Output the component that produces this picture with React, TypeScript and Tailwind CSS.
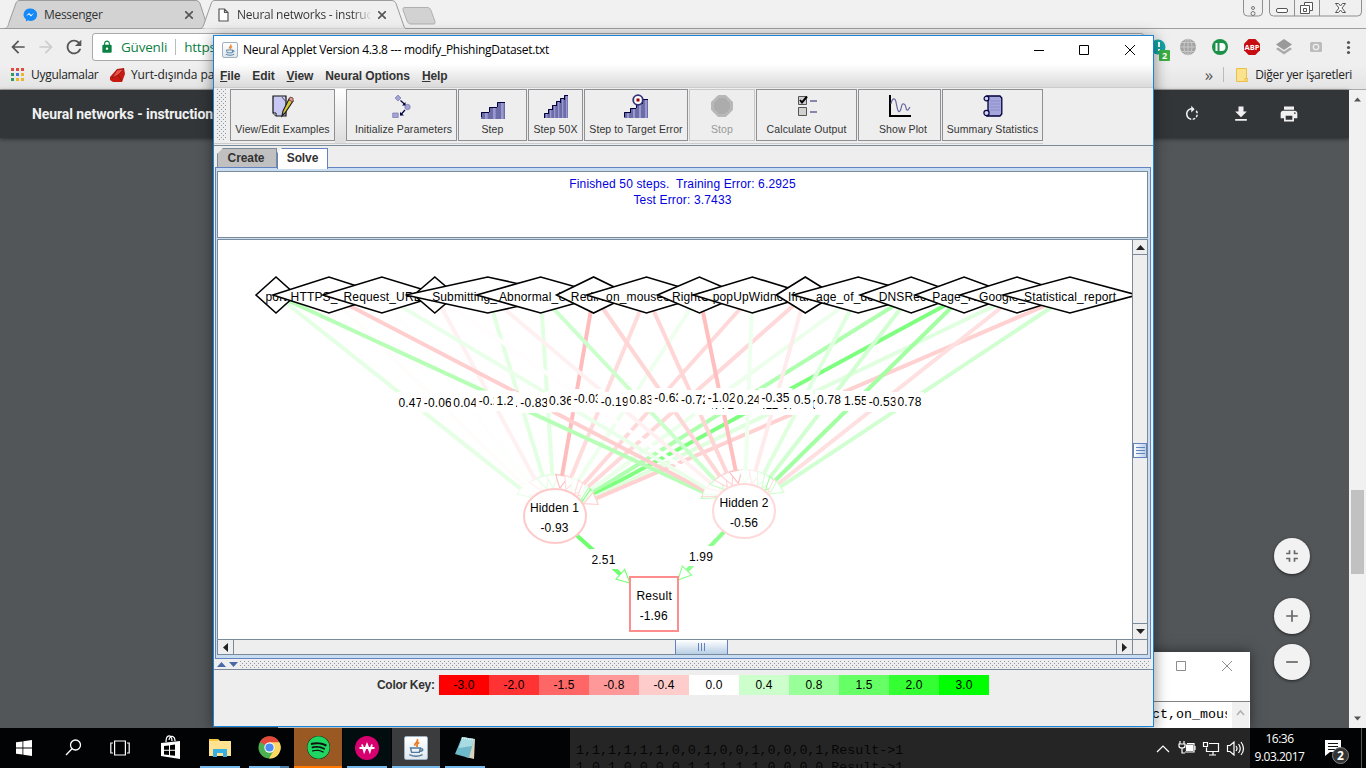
import React from "react";
import { MdRotateRight, MdFileDownload, MdPrint, MdFullscreenExit, MdAdd, MdRemove, MdArrowBack, MdArrowForward, MdRefresh, MdLock } from "react-icons/md";
import { FaSpotify } from "react-icons/fa";

type Feature = { name: string; half: number; h1: number; h2: number; l1: string; l2: string; y2: number };

const features: Feature[] = [
  { name: "port", half: 20, h1: 0.47, h2: 1.25, l1: "0.47", l2: "1.2", y2: 401 },
  { name: "HTTPS_token", half: 56, h1: -0.06, h2: -0.83, l1: "-0.06", l2: "-0.83", y2: 403 },
  { name: "Request_URL", half: 59, h1: 0.04, h2: 0.36, l1: "0.04", l2: "0.36", y2: 401 },
  { name: "", half: 21, h1: -0.25, h2: -0.03, l1: "-0.25", l2: "-0.03", y2: 399 },
  { name: "Submitting_to_email", half: 82, h1: 0.5, h2: -0.25, l1: "0.45", l2: "-0.19", y2: 402 },
  { name: "Abnormal_URL", half: 64, h1: 0.5, h2: 0.9, l1: "0.45", l2: "0.83", y2: 400 },
  { name: "Redirect", half: 37, h1: -1.15, h2: -0.7, l1: "-1.08", l2: "-0.63", y2: 398 },
  { name: "on_mouseover", half: 60, h1: -0.6, h2: -0.72, l1: "-0.60", l2: "-0.72", y2: 400 },
  { name: "RightClick", half: 42, h1: 0.3, h2: -1.1, l1: "0.30", l2: "-1.02", y2: 398 },
  { name: "popUpWidnow", half: 59, h1: -0.65, h2: 0.3, l1: "-0.60", l2: "0.24", y2: 400 },
  { name: "Iframe", half: 29, h1: -0.65, h2: -0.35, l1: "-0.65", l2: "-0.35", y2: 398 },
  { name: "age_of_domain", half: 65, h1: 0.35, h2: 0.55, l1: "12.77", l2: "0.5", y2: 400 },
  { name: "DNSRecord", half: 51, h1: 1.4, h2: 0.78, l1: "1.27", l2: "0.78", y2: 400 },
  { name: "Page_Rank", half: 49, h1: 2.2, h2: 1.6, l1: "2.11", l2: "1.55", y2: 401 },
  { name: "Google_Index", half: 57, h1: 0.55, h2: -0.53, l1: "0.55", l2: "-0.53", y2: 402 },
  { name: "Statistical_report", half: 67, h1: -0.8, h2: 0.8, l1: "-0.76", l2: "0.78", y2: 402 },
];

const nodeX = (i: number) => 276 + i * 52.93;
const tone = (w: number) => {
  const c = Math.round(255 - 58 * Math.abs(w));
  return w < 0 ? `rgb(255,${c},${c})` : `rgb(${c},255,${c})`;
};

function Arrow({ x1, y1, x2, y2, w }: { x1: number; y1: number; x2: number; y2: number; w: number }) {
  const d = Math.hypot(x2 - x1, y2 - y1);
  const ux = (x2 - x1) / d, uy = (y2 - y1) / d;
  const bx = x2 - ux * 13, by = y2 - uy * 13;
  return (
    <g stroke={tone(w)}>
      <line x1={x1} y1={y1} x2={bx} y2={by} strokeWidth={4} />
      <polygon points={`${x2},${y2} ${bx - uy * 6.500},${by + ux * 6.500} ${bx + uy * 6.500},${by - ux * 6.500}`} fill="#fff" strokeWidth={1.1} />
    </g>
  );
}

function InputArrow({ x, cx, cy, w }: { x: number; cx: number; cy: number; w: number }) {
  const dx = cx - x, dy = cy - 295;
  const t = 1 / Math.sqrt((dx / 32) ** 2 + (dy / 28) ** 2);
  return <Arrow x1={x} y1={295} x2={cx - dx * t} y2={cy - dy * t} w={w} />;
}

function Tag({ x, y, s }: { x: number; y: number; s: string }) {
  const w = s.length * 6 + 4;
  return (
    <g>
      <rect x={x - w / 2} y={y - 10} width={w} height={20} fill="#fff" />
      <text x={x} y={y + 4.3} textAnchor="middle">{s}</text>
    </g>
  );
}

function Network() {
  return (
    <svg width="914" height="399" viewBox="218 240 914 399" className="block bg-white font-['Liberation_Sans',sans-serif] text-[12px] tracking-[0.15px]">
      {features.map((f, i) => <InputArrow key={i} x={nodeX(i)} cx={555} cy={516} w={f.h1} />)}
      {features.map((f, i) => <InputArrow key={i} x={nodeX(i)} cx={744} cy={511} w={f.h2} />)}
      {features.map((f, i) => <Tag key={i} x={410.5 + i * 27.4} y={i > 10 ? 405 : i === 3 ? 400.5 : 402.2} s={f.l1} />)}
      {features.map((f, i) => <Tag key={i} x={i === 0 ? 505 : 507.500 + i * 26.800} y={f.y2} s={f.l2} />)}
      {features.map((f, i) => {
        const x = nodeX(i);
        return (
          <g key={i}>
            <polygon points={`${x - f.half},295 ${x},277 ${x + f.half},295 ${x},313`} fill="#fff" stroke="#000" strokeWidth="1.6" />
            <text x={x + 0.2} y="301" textAnchor="middle">{f.name}</text>
          </g>
        );
      })}
      <Arrow x1={555} y1={516} x2={630} y2={583} w={2.51} />
      <Arrow x1={744} y1={511} x2={678} y2={580} w={1.99} />
      <rect x="590" y="549" width="30" height="20" fill="#fff" />
      <text x="603.5" y="564" textAnchor="middle">2.51</text>
      <rect x="687" y="546" width="30" height="20" fill="#fff" />
      <text x="701" y="561" textAnchor="middle">1.99</text>
      <ellipse cx="555" cy="516" rx="31" ry="27" fill="#fff" stroke={tone(-0.93)} strokeWidth="2" />
      <text x="554.5" y="512" textAnchor="middle">Hidden 1</text>
      <text x="554.5" y="532" textAnchor="middle">-0.93</text>
      <ellipse cx="744" cy="511" rx="31" ry="27" fill="#fff" stroke={tone(-0.65)} strokeWidth="2" />
      <text x="744" y="507" textAnchor="middle">Hidden 2</text>
      <text x="744" y="527" textAnchor="middle">-0.56</text>
      <rect x="630" y="577" width="48" height="54" fill="#fff" stroke={tone(-1.96)} strokeWidth="2" />
      <text x="654.3" y="600" textAnchor="middle" letterSpacing="0.3">Result</text>
      <text x="653.7" y="620" textAnchor="middle">-1.96</text>
    </svg>
  );
}

/* ---------- toolbar drawings ---------- */
const EditIcon = () => (
  <svg width="22" height="23" viewBox="0 0 22 23">
    <path d="M1 1h13v20H4l-3-3z" fill="#c8c8f4" stroke="#111" strokeWidth="1.2" />
    <path d="M1 18h3v3" fill="#fff" stroke="#111" />
    <path d="M10 2l4 5" stroke="#555" />
    <path d="M17 4l4 2-8 12-3 3 1-5z" fill="#d8c838" stroke="#222" strokeWidth="1.2" />
    <path d="M18 2l3 1 0 4-4-2z" fill="#e59a94" stroke="#633" strokeWidth=".8" />
  </svg>
);
const InitIcon = () => (
  <svg width="19" height="25" viewBox="0 0 19 25">
    <g fill="#a3a3d6" stroke="#7777ad" strokeWidth=".7">
      <path d="M6 1l3 3-3 3-3-3z" /><circle cx="15.500" cy="13" r="2.700" /><path d="M.7 19h5.500v4.500H.7z" />
    </g>
    <path d="M8.500 6.500l4.500 4M13 16l-4.500 5" stroke="#00003c" strokeWidth="1.2" />
    <path d="M13.500 8v3.500H10zM8 18v3.500h4z" fill="#00003c" />
  </svg>
);
const Stairs = ({ n, target = false }: { n: number; target?: boolean }) => {
  const top = n === 3 ? [10, 5, 0] : n === 4 ? [18, 14, 9, 5] : [19, 15, 11, 7, 4, 1];
  const H = n === 3 ? 17 : 24;
  const s = 24 / n;
  return (
    <svg width="24" height={H} viewBox={`0 0 24 ${H}`}>
      {top.map((t, i) => (
        <g key={i}>
          <rect x={i * s} y={t} width={s} height={H - t} fill="#6c6ca6" />
          <rect x={i * s + s / 2} y={t + 1} width={s / 3} height={H - t} fill="#9999cf" />
          <path d={`M${i * s + 0.5} ${t + 5}V${t + 0.5}h${s}`} fill="none" stroke="#00003c" />
        </g>
      ))}
      {target && <g><circle cx="14" cy="6" r="4.800" fill="#fff" stroke="#33337a" strokeWidth="1.8" /><rect x="12.500" y="4.500" width="3" height="3" fill="#900" /></g>}
    </svg>
  );
};
const StopIcon = () => (
  <svg width="22" height="22" viewBox="0 0 22 22"><path d="M7 .7h8L21.300 7v8L15 21.300H7L.7 15V7z" fill="#b9b9b9" stroke="#b0b0b0" /><path d="M8 3h6l5 5v6l-5 5H8l-5-5V8z" fill="#acacac" /></svg>
);
const CalcIcon = () => (
  <svg width="20" height="22" viewBox="0 0 20 22">
    <path d="M1.500 1.500h8v8h-8zM1.500 12.500h8v8h-8z" fill="#d0d0d0" stroke="#555" />
    <path d="M3 5l2 2.500L10 1.500" fill="none" stroke="#000" strokeWidth="2" />
    <path d="M13 6h7M13 17h7" stroke="#666699" strokeWidth="1.600" />
  </svg>
);
const PlotIcon = () => (
  <svg width="22" height="22" viewBox="0 0 22 22">
    <path d="M1 0v21H22" fill="none" stroke="#000" strokeWidth="2" />
    <path d="M2 9c1-6 4-7 5-2s2 12 4 9 1-8 4-7 1 7 4 6l2-3" fill="none" stroke="#6666a0" strokeWidth="1.200" />
  </svg>
);
const ScrollIcon = () => (
  <svg width="20" height="22" viewBox="0 0 20 22">
    <path d="M4 1h13l1.800 2v16l-1.800 2H4l1-3V4z" fill="#a6a6dc" stroke="#00003c" strokeWidth="1.300" />
    <g fill="#d5d5f5" stroke="#00003c" strokeWidth="1.200"><circle cx="3.500" cy="3.500" r="2.400" /><circle cx="3.500" cy="18" r="2.600" /></g>
    <path d="M7 6h10M7 9h10M7 12h10M7 15h10" stroke="#8d8dc8" strokeWidth="1.200" />
  </svg>
);

function ToolButton({ w, label, icon, off, pad = "" }: { w: string; label: string; icon: React.ReactNode; off?: boolean; pad?: string }) {
  return (
    <div className={`${w} flex h-[52px] shrink-0 flex-col items-center justify-end border bg-[#eee] pb-[3px] ${off ? "border-[#c8c8c8] text-[#999]" : "border-[#8f9094] text-[#333]"}`}>
      <div className="flex h-[28px] items-center">{icon}</div>
      <span className={`${pad} mt-[2px] whitespace-nowrap text-[10.5px] leading-[15px] tracking-[0.1px]`}>{label}</span>
    </div>
  );
}

const JavaTile = ({ className }: { className: string }) => (
  <div className={`${className} flex items-center justify-center rounded-[2px] border border-[#9fb0c0] bg-gradient-to-b from-white to-[#dfe8ef]`}>
    <svg viewBox="0 0 20 20" className="h-full w-full" fill="none">
      <path d="M11 2c2 3-3 3-2 6M13 5c-3 1-2 3-2 4" stroke="#ec7a20" strokeWidth="1.600" />
      <path d="M5 10h9l-1 4H6zM14 11c3-1 3 2-1 2M4 16c4 2 8 2 12 0" stroke="#51799b" strokeWidth="1.300" />
    </svg>
  </div>
);

const scale: [string, string][] = [
  ["-3.0", "bg-[#ff0000]"], ["-2.0", "bg-[#ff3333]"], ["-1.5", "bg-[#ff6666]"], ["-0.8", "bg-[#ff9999]"], ["-0.4", "bg-[#ffcccc]"], ["0.0", "bg-white"],
  ["0.4", "bg-[#ccffcc]"], ["0.8", "bg-[#99ff99]"], ["1.5", "bg-[#66ff66]"], ["2.0", "bg-[#33ff33]"], ["3.0", "bg-[#00ff00]"],
];

const Tri = ({ d, fill = "#222" }: { d: string; fill?: string }) => (
  <svg width="9" height="9" viewBox="0 0 9 9"><path d={d} fill={fill} /></svg>
);

function Dots({ className }: { className: string }) {
  return <div className={`${className} bg-[conic-gradient(from_270deg_at_1px_1px,#8e98a4_90deg,transparent_0),conic-gradient(from_270deg_at_1px_1px,#8e98a4_90deg,transparent_0)] bg-[length:4px_4px] [background-position:0_0,2px_2px]`} />;
}

function AppletWindow() {
  return (
    <section className="absolute left-[213px] top-[35px] z-20 flex h-[692px] w-[941px] flex-col border border-[#1883d7] bg-[#eee] font-['Liberation_Sans',sans-serif] shadow-[0_2px_14px_rgba(0,0,0,0.45)]">
      <header className="flex h-[28px] shrink-0 items-center bg-white pl-[8px]">
        <JavaTile className="h-[16px] w-[16px]" />
        <span className="ml-[5px] whitespace-nowrap font-['Open_Sans',sans-serif] text-[12px] tracking-[-0.29px] text-black">Neural Applet Version 4.3.8 --- modify_PhishingDataset.txt</span>
        <svg width="102" height="12" viewBox="0 0 102 12" className="ml-auto mr-[17px]" fill="none" stroke="#000">
          <path d="M0 6.500h10M45.500 1.500h9v9h-9zM91 1l10 10M101 1l-10 10" />
        </svg>
      </header>
      <nav className="flex h-[24px] shrink-0 items-center gap-[12px] border-b border-[#ccc] bg-gradient-to-b from-white to-[#dadada] pl-[6px] text-[12px] font-bold tracking-[-0.1px] text-[#333]">
        <span><u>F</u>ile</span><span>Edit</span><span><u>V</u>iew</span><span>Neural Options</span><span><u>H</u>elp</span>
      </nav>
      <div className="flex h-[58px] shrink-0 border-b border-[#7a8a99] pt-[1px]">
        <div className="flex h-[55px] border-b border-[#ccc] pl-[3px]">
          <Dots className="mr-[3px] h-[52px] w-[10px]" />
          <ToolButton w="w-[105px]" label="View/Edit Examples" icon={<EditIcon />} />
          <div className="w-[11px] bg-gradient-to-b from-white to-[#ddd]" />
          <div className="flex gap-px">
            <ToolButton w="w-[111px]" label="Initialize Parameters" icon={<InitIcon />} pad="pl-[4px]" />
            <ToolButton w="w-[69px]" label="Step" icon={<div className="pt-[8px]"><Stairs n={3} /></div>} />
            <ToolButton w="w-[55px]" label="Step 50X" icon={<Stairs n={6} />} />
            <ToolButton w="w-[104px]" label="Step to Target Error" icon={<Stairs n={4} target />} />
            <ToolButton w="w-[66px]" label="Stop" icon={<StopIcon />} off />
            <ToolButton w="w-[101px]" label="Calculate Output" icon={<CalcIcon />} />
            <ToolButton w="w-[83px]" label="Show Plot" icon={<PlotIcon />} pad="pl-[7px]" />
            <ToolButton w="w-[101px]" label="Summary Statistics" icon={<ScrollIcon />} />
          </div>
        </div>
      </div>
      <div className="flex h-[21px] shrink-0 items-end pl-[3px] text-[12px] font-bold tracking-[-0.1px] text-[#333]">
        <div className="flex h-[19px] w-[60px] items-center justify-center border border-b-0 border-[#7a8a99] bg-[#c0c0c0] pr-[2px] [clip-path:polygon(6px_0,100%_0,100%_100%,0_100%,0_6px)]">Create</div>
        <div className="-mb-[2px] flex h-[21px] w-[51px] items-center justify-center border border-b-0 border-[#6382bf] bg-white pb-[2px] [clip-path:polygon(5px_0,100%_0,100%_100%,0_100%,0_5px)]">Solve</div>
      </div>
      <div className="ml-px mr-[2px] flex h-[492px] shrink-0 flex-col border border-[#6382bf] bg-[#c8ddf2] pl-[1px] pr-[2px] pt-[3px]">
        <div className="h-[67px] border border-[#7a8a99] bg-white pt-[4px] text-center text-[12px] leading-[16px] tracking-[0.15px] text-[#0000e0]">
          <div className="whitespace-pre">Finished 50 steps.  Training Error: 6.2925</div>
          <div>Test Error: 3.7433</div>
        </div>
        <div className="mt-px border border-r-0 border-[#7a8a99] bg-white">
          <div className="flex h-[399px]">
            <Network />
            <div className="flex w-[16px] flex-col items-stretch border-x border-[#7a8a99] bg-[#eee]">
              <div className="flex h-[15px] items-center justify-center border-b border-[#7a8a99]"><Tri d="M0 7l4.500-5L9 7z" /></div>
              <div className="mt-[188px] flex h-[15px] flex-col items-center justify-center gap-[2px] border border-[#6382bf] bg-gradient-to-r from-white to-[#b8cfe5]">
                <i className="h-px w-[9px] bg-[#6382bf]" /><i className="h-px w-[9px] bg-[#6382bf]" /><i className="h-px w-[9px] bg-[#6382bf]" />
              </div>
              <div className="mt-auto flex h-[16px] items-center justify-center border-t border-[#7a8a99]"><Tri d="M0 2l4.500 5L9 2z" /></div>
            </div>
          </div>
          <div className="flex h-[15px] border-r border-t border-[#7a8a99] bg-[#eee]">
            <div className="flex w-[16px] items-center justify-center border-r border-[#7a8a99]"><Tri d="M7 0L2 4.500 7 9z" /></div>
            <div className="ml-[441px] flex w-[53px] items-center justify-center gap-[2px] border-x border-[#6382bf] bg-gradient-to-b from-white to-[#b8cfe5]">
              <i className="h-[8px] w-px bg-[#6382bf]" /><i className="h-[8px] w-px bg-[#6382bf]" /><i className="h-[8px] w-px bg-[#6382bf]" />
            </div>
            <div className="ml-auto flex w-[31px] items-center border-l border-[#7a8a99]">
              <div className="flex h-full w-[16px] items-center justify-center border-r border-[#7a8a99]"><Tri d="M2 0l5 4.500L2 9z" /></div>
            </div>
          </div>
        </div>
      </div>
      <div className="flex h-[11px] shrink-0 items-center border-b border-[#7a8a99] pl-[3px]">
        <Tri d="M0 7l4.500-5L9 7z" fill="#4a67a8" />
        <div className="w-[3px]" />
        <Tri d="M0 2l4.500 5L9 2z" fill="#4a67a8" />
        <Dots className="ml-[2px] mr-[3px] h-[7px] flex-1" />
      </div>
      <div className="mt-[5px] flex h-[20px] items-center pl-[163px] text-[12px] tracking-[0.1px] text-black">
        <b className="w-[62px] tracking-[-0.3px] text-[#333]">Color Key:</b>
        {scale.map(([v, c]) => <span key={v} className={`${c} flex h-[20px] w-[50px] items-center justify-center`}>{v}</span>)}
      </div>
    </section>
  );
}

function NotepadWindow() {
  return (
    <section className="absolute left-[278px] top-[652px] z-10 flex h-[76px] w-[972px] flex-col bg-white shadow-[0_0_12px_rgba(0,0,0,0.5)]">
      <div className="flex h-[50px] shrink-0 justify-end border-b border-[#828282] pr-[17px] pt-[9px]">
        <svg width="57" height="11" viewBox="0 0 57 11" fill="none" stroke="#8c8c8c"><path d="M.5.5h9v9h-9zM46 0l10 10M56 0L46 10" /></svg>
      </div>
      <div className="flex flex-1 justify-end overflow-hidden">
        <div className="mr-[5px] w-[79px] overflow-hidden pl-[4px] pt-[4px] font-['Liberation_Mono',monospace] text-[13.33px] leading-[17px] text-black">ct,on_mous</div>
        <div className="mr-px flex w-[17px] justify-center bg-[#f0f0f0] pt-[7px]"><svg width="9" height="7" viewBox="0 0 9 7"><path d="M1 6l3.500-4L8 6" fill="none" stroke="#b0b0b0" strokeWidth="1.600" /></svg></div>
      </div>
    </section>
  );
}

function Browser() {
  return (
    <div className="flex h-[728px] flex-col font-['Open_Sans',sans-serif] text-[12px]">
      <div className="relative h-[29px] shrink-0 bg-[#f1f1f1]">
        <svg width="1366" height="29" className="absolute left-0 top-0">
          <path d="M0 28.500H1366" stroke="#a0a0a0" />
          <path d="M4 28.500c4 0 4-3 5-6L16 3c1-2 2-2.500 4-2.500h175c3 0 4 1 5 3l8 25z" fill="#d3d3d3" stroke="#9b9b9b" />
          <path d="M199 29c3 0 4-2 5-5l7-20c1-3 2-3.500 4-3.500h176c3 0 4 1 5 3l7 20c1 4 2 5.500 5 5.500z" fill="#efefef" stroke="#9b9b9b" />
          <path d="M205 29.500h200" stroke="#efefef" strokeWidth="2" />
          <path d="M405 7.500h22c2 0 3 .5 4 3l4 11c0 2 0 2.500-2 2.500h-22c-2 0-3-1-4-3l-4-11c0-2 0-2.500 2-2.500z" fill="#d2d2d2" stroke="#b0b0b0" />
          <path d="M1243.500 0v12q0 4 4 4h11q4 0 4-4V0M1269.500 0v12q0 4 4 4h84q4 0 4-4V0M1294.500 0v16M1319.500 0v16" fill="#f0f0f0" stroke="#8f8f8f" />
          <circle cx="1253" cy="8" r="1.500" fill="none" stroke="#777" /><circle cx="1253" cy="13.500" r="2" fill="none" stroke="#777" />
          <rect x="1276.500" y="8.500" width="11" height="4" rx="1.500" fill="#fff" stroke="#555" />
          <path d="M1304.500 2.500h8v8h-3v3h-9v-8h4z" fill="#fff" stroke="#555" /><path d="M1303.500 8.500h3v3h-3zM1304.500 5.500h5v5" fill="none" stroke="#555" />
          <path d="M1335.500 3.500h3l2 2.500 2-2.500h3l-3.500 4.500 3.500 4.500h-3l-2-2.500-2 2.500h-3l3.500-4.500z" fill="#fff" stroke="#555" />
        </svg>
        <div className="relative flex h-[29px] items-center text-[#333]">
          <svg width="14" height="14" viewBox="0 0 14 14" className="ml-[23px]"><path d="M7 .5a6.500 6.200 0 0 0-4 11v2l2-1.200A6.500 6.200 0 1 0 7 .5z" fill="#1689f8" /><path d="M3 8l3-3 2 2 3-2-3 3.500-2-2z" fill="#fff" /></svg>
          <span className="ml-[7px] w-[141px] tracking-[-0.3px]">Messenger</span>
          <svg width="8" height="8" viewBox="0 0 8 8" stroke="#555" strokeWidth="1.600"><path d="M0 0l8 8M8 0L0 8" /></svg>
          <svg width="11" height="14" viewBox="0 0 11 14" className="ml-[25px]" fill="#fff" stroke="#555" strokeWidth="1.200"><path d="M1 1h5.500L10 4.500V13H1zM6.500 1v3.500H10" /></svg>
          <div className="ml-[8px] w-[135px] overflow-hidden whitespace-nowrap bg-gradient-to-r from-[#333] from-85% to-[#efefef] bg-clip-text tracking-[-0.25px] text-transparent">Neural networks - instruc</div>
          <svg width="8" height="8" viewBox="0 0 8 8" className="ml-[6px]" stroke="#555" strokeWidth="1.600"><path d="M0 0l8 8M8 0L0 8" /></svg>
        </div>
      </div>
      <div className="flex h-[36px] shrink-0 items-center bg-[#efefef] text-[14px]">
        <MdArrowBack className="ml-[8px] text-[20px] text-[#555]" />
        <MdArrowForward className="ml-[8px] text-[20px] text-[#ccc]" />
        <MdRefresh className="ml-[7px] text-[22px] text-[#555]" />
        <div className="ml-[7px] flex h-[28px] w-[1052px] shrink-0 items-center rounded-[3px] border border-[#a9a9a9] bg-white text-[#0b8043]">
          <MdLock className="ml-[7px] text-[14px]" />
          <span className="ml-[7px] text-[13.500px] tracking-[-0.2px]">Güvenli</span>
          <span className="mx-[8px] h-[16px] w-px bg-[#bbb]" />
          <span className="text-[13.500px] tracking-[-0.2px]">https</span>
        </div>
        <svg width="222" height="30" viewBox="1144 32 222 30" className="shrink-0">
          <circle cx="1158" cy="47" r="7.500" fill="#12a5a5" /><path d="M1159 42v5M1159 49v2" stroke="#fff" strokeWidth="2" />
          <rect x="1159" y="50" width="11" height="11" rx="1" fill="#3cb043" /><text x="1164.500" y="59" fontSize="9" fontWeight="bold" fill="#fff" textAnchor="middle">2</text>
          <circle cx="1188" cy="47" r="8" fill="#a3a3a3" /><path d="M1180 47h16M1188 39v16M1182 42.500h12M1182 51.500h12" stroke="#c8c8c8" /><ellipse cx="1188" cy="47" rx="4" ry="8" fill="none" stroke="#c8c8c8" />
          <circle cx="1220" cy="47" r="8" fill="#1c9148" /><path d="M1216.500 43v8" stroke="#fff" strokeWidth="2" /><path d="M1219.500 43h2a4 4 0 0 1 0 8h-2z" fill="#fff" />
          <path d="M1248.700 39h6.600l4.700 4.700v6.600l-4.700 4.700h-6.600l-4.700-4.700v-6.600z" fill="#c70d12" /><text x="1252" y="50" fontSize="7.500" fontWeight="bold" fill="#fff" textAnchor="middle">ABP</text>
          <path d="M1284 39l8 5.500-8 5.500-8-5.500z" fill="#999" /><path d="M1276 49l2-1.500 6 4 6-4 2 1.500-8 5.500z" fill="#aaa" />
          <rect x="1310" y="42" width="12" height="10" rx="1.500" fill="#bcbcbc" /><circle cx="1316" cy="47" r="2.700" fill="none" stroke="#eee" strokeWidth="1.300" />
          <g fill="#555"><circle cx="1348.500" cy="42.500" r="1.600" /><circle cx="1348.500" cy="47.500" r="1.600" /><circle cx="1348.500" cy="52.500" r="1.600" /></g>
        </svg>
      </div>
      <div className="flex h-[25px] shrink-0 items-center border-b border-[#aaa] bg-gradient-to-b from-[#efefef] to-[#e4e4e4] pb-[5px] text-[#222]">
        <div className="ml-[11px] grid grid-cols-3 gap-[2px]">
          {["bg-[#e04a3f]", "bg-[#e04a3f]", "bg-[#e04a3f]", "bg-[#2f9e5b]", "bg-[#3b82e0]", "bg-[#f0b429]", "bg-[#2f9e5b]", "bg-[#f0b429]", "bg-[#f0b429]"].map((c, i) => <i key={i} className={`${c} h-[3px] w-[3px]`} />)}
        </div>
        <span className="ml-[7px] w-[78px] whitespace-nowrap tracking-[-0.3px]">Uygulamalar</span>
        <svg width="17" height="16" viewBox="0 0 17 16"><path d="M1 10L8 2l7-1 1 6-3 8-9 0-3-2z" fill="#c61a12" /><path d="M3 11l5-8 7-1-6 6zM9 8l4 6" fill="#ea5448" stroke="#7b0d08" strokeWidth=".6" /></svg>
        <span className="ml-[5px] whitespace-nowrap tracking-[-0.1px]">Yurt-dışında para</span>
        <span className="ml-auto text-[17px] leading-[10px] text-[#555]">»</span>
        <span className="ml-[10px] h-[15px] w-px bg-[#bbb]" />
        <svg width="12" height="14" viewBox="0 0 12 14" className="ml-[12px]"><path d="M.5.5h10v13H.5z" fill="#fbe28c" stroke="#e8c04a" /><path d="M9 10.500h2.500v3H9z" fill="#fbe28c" stroke="#e8c04a" /></svg>
        <span className="ml-[7px] mr-[14px] whitespace-nowrap tracking-[-0.3px]">Diğer yer işaretleri</span>
      </div>
      <div className="flex min-h-0 flex-1">
        <div className="flex flex-1 flex-col bg-[#525659]">
          <div className="flex h-[48px] items-center bg-[#323639] pl-[32px] pr-[50px] text-[#f1f1f1] shadow-[0_1px_4px_rgba(0,0,0,0.5)]">
            <span className="whitespace-nowrap font-[Roboto,sans-serif] text-[14px] font-bold tracking-[-0.08px]">Neural networks - instruction</span>
            <MdRotateRight className="ml-auto text-[18px]" />
            <MdFileDownload className="ml-[30px] text-[20px]" />
            <MdPrint className="ml-[28px] text-[20px]" />
          </div>
          <div className="flex flex-1 flex-col items-end pr-[39px] pt-[400px] text-[20px] text-[#666]">
            <div className="flex h-[36px] w-[36px] items-center justify-center rounded-full bg-[#f2f2f2] shadow-[0_1px_3px_rgba(0,0,0,0.6)]"><MdFullscreenExit /></div>
            <div className="mt-[24px] flex h-[36px] w-[36px] items-center justify-center rounded-full bg-[#f2f2f2] shadow-[0_1px_3px_rgba(0,0,0,0.6)]"><MdAdd /></div>
            <div className="mt-[10px] flex h-[36px] w-[36px] items-center justify-center rounded-full bg-[#f2f2f2] shadow-[0_1px_3px_rgba(0,0,0,0.6)]"><MdRemove /></div>
          </div>
        </div>
        <div className="flex w-[17px] flex-col items-center bg-[#f1f1f1] py-[5px]">
          <Tri d="M1 6.500l3.500-4 3.500 4z" fill="#555" />
          <div className="mt-[386px] h-[84px] w-[13px] bg-[#c1c1c1]" />
          <div className="mt-auto"><Tri d="M1 2.500l3.500 4 3.500-4z" fill="#555" /></div>
        </div>
      </div>
    </div>
  );
}

function TaskCell({ children, bg = "", line = "" }: { children: React.ReactNode; bg?: string; line?: string }) {
  return (
    <div className={`mr-px flex h-[40px] w-[48px] shrink-0 flex-col items-center ${bg}`}>
      <div className="flex h-[38px] items-center justify-center pt-[1px]">{children}</div>
      <div className={`h-[2px] ${line}`} />
    </div>
  );
}

function Taskbar() {
  return (
    <footer className="flex h-[40px] bg-[#020304] text-white">
      <div className="flex w-[570px] shrink-0">
        <TaskCell><svg width="16" height="16" viewBox="0 0 16 16" fill="#fff"><path d="M0 2.300l6.500-.9v6.200H0zM7.300 1.300L16 0v7.600H7.300zM0 8.400h6.500v6.200L0 13.700zM7.300 8.400H16V16l-8.700-1.300z" /></svg></TaskCell>
        <TaskCell><svg width="17" height="17" viewBox="0 0 17 17" fill="none" stroke="#fff" strokeWidth="1.300"><circle cx="10.500" cy="6" r="5" /><path d="M7 9.700L1 16" /></svg></TaskCell>
        <TaskCell><svg width="20" height="16" viewBox="0 0 20 16" className="-ml-[4px]" fill="none" stroke="#fff" strokeWidth="1.200"><path d="M4.600 1h10.800v14H4.600zM3 3H.8v10H3M17 3h2.200v10H17" /></svg></TaskCell>
        <TaskCell><svg width="22" height="25" viewBox="0 0 22 25"><path d="M1 8l19-2v18L1 21z" fill="#fff" /><path d="M6 7c0-8 6-8 6-1M9 5c1-6 6-4 6 1" fill="none" stroke="#fff" strokeWidth="1.200" /><path d="M4 11l5-.6v4.300H4zM10 10.200l5-.6v5.100h-5zM4 15.700h5v4.300l-5-.6zM10 15.700h5v5.100l-5-.6z" fill="#000" /></svg></TaskCell>
        <TaskCell line="w-[40px] bg-[#76b9ed]"><svg width="22" height="20" viewBox="0 0 22 20"><path d="M0 1h9l2 2h11v15H0z" fill="#ffe391" /><path d="M0 1h9v2H0z" fill="#f5c842" /><path d="M4 11h14v8h-4v-4H8v4H4z" fill="#36b0e3" /></svg></TaskCell>
        <TaskCell line="w-[40px] bg-[linear-gradient(to_right,#76b9ed_78%,#4d7fa8_78%)]">
          <svg width="23" height="23" viewBox="0 0 24 24"><circle cx="12" cy="12" r="11.500" fill="#4caf50" /><path d="M12 12L2 6.200A11.500 11.500 0 0 1 22 6.200z" fill="#e5473b" /><path d="M12 6.500h10.300A11.500 11.500 0 0 1 11.500 23.500L17 14z" fill="#fdd663" /><circle cx="12" cy="12" r="5.400" fill="#fff" /><circle cx="12" cy="12" r="4.300" fill="#4b8bf4" /></svg>
        </TaskCell>
        <TaskCell bg="bg-[#9a5823]" line="w-full bg-[#ff7800]"><div className="rounded-full bg-[#111]"><FaSpotify className="text-[23px] text-[#1ed760]" /></div></TaskCell>
        <TaskCell bg="bg-[#020d10]" line="w-[40px] bg-[#76b9ed]"><svg width="24" height="24" viewBox="0 0 24 24"><circle cx="12" cy="12" r="12" fill="#d6006f" /><path d="M4.500 12h15M7 8.500l2.200 7 2.800-7 2.800 7 2.200-7" fill="none" stroke="#fff" strokeWidth="1.800" /></svg></TaskCell>
        <TaskCell bg="bg-[#3a3c3e]" line="w-full bg-[#76b9ed]"><JavaTile className="h-[24px] w-[24px]" /></TaskCell>
        <TaskCell line="w-[40px] bg-[#76b9ed]"><svg width="24" height="24" viewBox="0 0 24 24"><path d="M9 1l13 2-1 20-8-2z" fill="#d9d2bd" /><path d="M9 1l12 2-5 19L2 18z" fill="#6db9c9" /><path d="M9 1l12 2-2 7L6 12z" fill="#a9dbe3" /><path d="M9 2l12 2" stroke="#fff" strokeDasharray="1 1" /></svg></TaskCell>
      </div>
      <div className="w-[680px] shrink-0 overflow-hidden bg-[#252525]">
        <div className="h-[40px] whitespace-pre pl-[6px] pt-[14px] font-['Liberation_Mono',monospace] text-[13.33px] leading-[17px] tracking-[-0.02px] text-[#050505]">{"1,1,1,1,1,1,0,0,1,0,0,1,0,0,0,1,Result->1\n1,0,1,0,0,0,0,1,1,1,1,1,0,0,0,0,Result->1"}</div>
      </div>
      <div className="-ml-[95px] flex shrink-0 items-center">
        <svg width="90" height="16" viewBox="1155 740 90 16" fill="none" stroke="#fff" strokeWidth="1.200">
          <path d="M1157 752l6-6 6 6" />
          <path d="M1180 741v3M1184 741v3M1179 744h6v2q0 2-3 2t-3-2zM1182 748v5h3M1187 743.500h7v8.500h-9" /><path d="M1186.500 745h6v5.500h-6z" fill="#fff" /><path d="M1195 746v4" />
          <path d="M1209 743.500h9.500v8h-12v-4M1203.500 742.500h4v4h-4zM1213 752v3M1209 755h7" />
          <path d="M1227.500 745.500h2.500l4-3.500v13l-4-3.500h-2.500zM1236 746q2 2.500 0 5M1238.500 744q3.500 4.500 0 9M1241 742q5 6.500 0 13" />
        </svg>
      </div>
      <div className="ml-[1px] flex w-[64px] shrink-0 flex-col items-center pl-[3px] pt-[2px] font-['Open_Sans',sans-serif] text-[12px] leading-[18px] tracking-[-0.5px]">
        <span>16:36</span><span>9.03.2017</span>
      </div>
      <svg width="56" height="40" viewBox="1310 728 56 40" className="shrink-0">
        <path d="M1325 740h16v12h-11l-5 4z" fill="#fff" /><path d="M1328 743.500h10M1328 746.500h10M1328 749.500h7" stroke="#111" strokeWidth="1.200" />
        <circle cx="1340.500" cy="755.500" r="8" fill="#333" stroke="#888" /><text x="1340.500" y="760" fontSize="12" fontWeight="bold" fontFamily="Open Sans" fill="#fff" textAnchor="middle">2</text>
        <path d="M1361.500 728v40" stroke="#555" />
      </svg>
    </footer>
  );
}

export default function App() {
  return (
    <main className="relative h-[768px] w-[1366px] overflow-hidden bg-black">
      <Browser />
      <NotepadWindow />
      <AppletWindow />
      <div className="relative z-30"><Taskbar /></div>
    </main>
  );
}
